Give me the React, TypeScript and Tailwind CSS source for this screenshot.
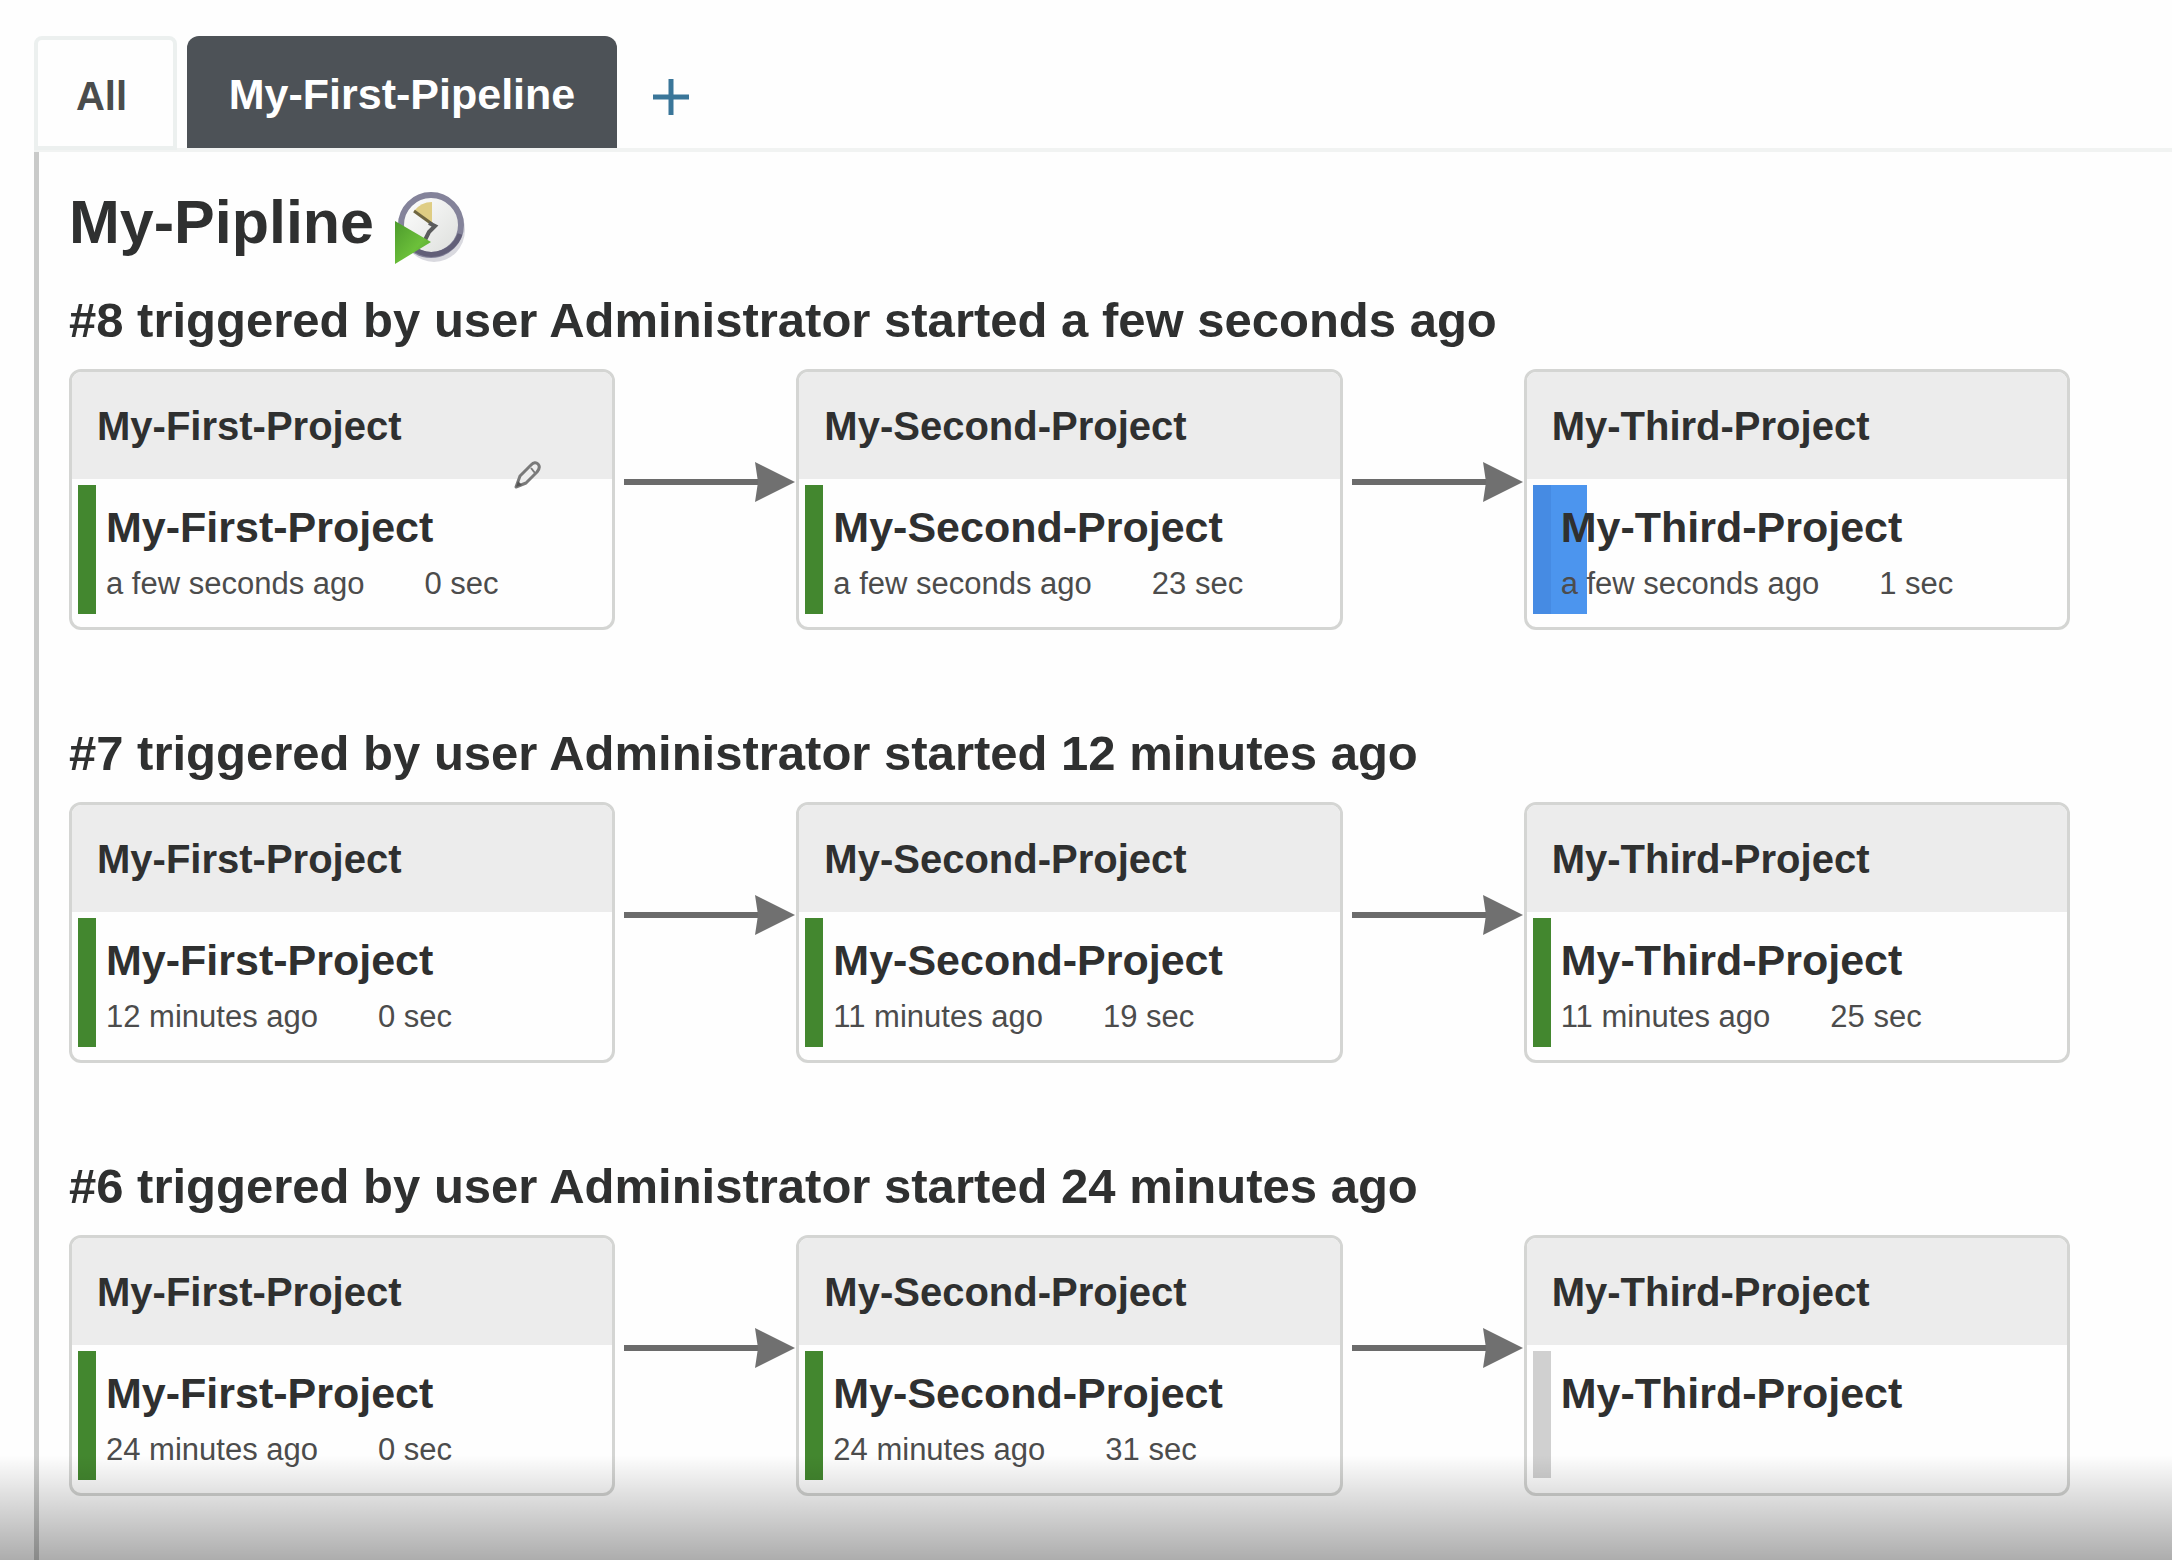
type Status = "success" | "running" | "idle";
type Task = { name: string; status: Status; when?: string; duration?: string; editable?: boolean };
type Run = { title: string; tasks: Task[] };

const runs: Run[] = [
  {
    title: "#8 triggered by user Administrator started a few seconds ago",
    tasks: [
      { name: "My-First-Project", status: "success", when: "a few seconds ago", duration: "0 sec", editable: true },
      { name: "My-Second-Project", status: "success", when: "a few seconds ago", duration: "23 sec" },
      { name: "My-Third-Project", status: "running", when: "a few seconds ago", duration: "1 sec" },
    ],
  },
  {
    title: "#7 triggered by user Administrator started 12 minutes ago",
    tasks: [
      { name: "My-First-Project", status: "success", when: "12 minutes ago", duration: "0 sec" },
      { name: "My-Second-Project", status: "success", when: "11 minutes ago", duration: "19 sec" },
      { name: "My-Third-Project", status: "success", when: "11 minutes ago", duration: "25 sec" },
    ],
  },
  {
    title: "#6 triggered by user Administrator started 24 minutes ago",
    tasks: [
      { name: "My-First-Project", status: "success", when: "24 minutes ago", duration: "0 sec" },
      { name: "My-Second-Project", status: "success", when: "24 minutes ago", duration: "31 sec" },
      { name: "My-Third-Project", status: "idle" },
    ],
  },
];

function PlusIcon() {
  return (
    <svg viewBox="0 0 36 36" className="size-9" aria-hidden="true">
      <path d="M18 0v36M0 18h36" stroke="#3a7699" strokeWidth="5" fill="none" />
    </svg>
  );
}

function ClockIcon() {
  return (
    <svg viewBox="0 0 72 74" className="h-[74px] w-[72px]" aria-hidden="true">
      <defs>
        <linearGradient id="face" x1="0" y1="0" x2="1" y2="1">
          <stop offset="0" stopColor="#ffffff" />
          <stop offset="1" stopColor="#dcdedb" />
        </linearGradient>
        <linearGradient id="play" x1="0" y1="0" x2="1" y2="1">
          <stop offset="0" stopColor="#4c9a2c" />
          <stop offset="0.6" stopColor="#6cc03a" />
          <stop offset="1" stopColor="#4f9c2c" />
        </linearGradient>
      </defs>
      <ellipse cx="40" cy="39" rx="31" ry="32" fill="#d9d9df" />
      <circle cx="37" cy="34" r="30" fill="url(#face)" stroke="#84839a" strokeWidth="6" />
      <path d="M14 52A30 30 0 0 0 66 43" fill="none" stroke="#625f78" strokeWidth="5" />
      <path d="M20 20Q27 11 38 11L38 33Z" fill="#dfcd83" />
      <path d="M20 20L38 33" stroke="#6f6640" strokeWidth="3" />
      <path d="M35 32l6 3-6 6-4 8" stroke="#5b5c5d" strokeWidth="4" fill="none" />
      <path d="M1 30L37 51L1 73Z" fill="url(#play)" />
    </svg>
  );
}

function PencilIcon() {
  return (
    <svg viewBox="0 0 28 28" className="size-7" aria-hidden="true">
      <path
        d="M2 26L6 15L17 4Q21 0 24 3Q27 6 23 11L12 22Z"
        fill="#efefef"
        stroke="#7a7a7a"
        strokeWidth="3"
        strokeLinejoin="round"
      />
      <path d="M17 7l4 5" stroke="#7a7a7a" strokeWidth="2" />
      <path d="M2 26l2-6 4 4z" fill="#555" />
    </svg>
  );
}

function Arrow() {
  return (
    <svg viewBox="0 0 172 40" className="ml-[9px] mt-[93px] h-10 w-[172px] shrink-0" aria-hidden="true">
      <path d="M0 20H140" stroke="#6b6b6b" strokeWidth="6" />
      <path d="M131 0L171 20L131 40L134 20Z" fill="#707070" />
    </svg>
  );
}

function StatusBar({ status }: { status: Status }) {
  if (status === "running") {
    return (
      <div className="absolute top-[6px] left-[6px] flex h-[129px] w-[54px] bg-[#4c95ee]">
        <div className="w-[18px] bg-[#468be3]" />
      </div>
    );
  }
  if (status === "idle") {
    return <div className="absolute top-[6px] left-[6px] h-[127px] w-[18px] bg-[#d0d0d0]" />;
  }
  return <div className="absolute top-[6px] left-[6px] h-[129px] w-[18px] bg-[#43872f]" />;
}

function Card({ task }: { task: Task }) {
  return (
    <article className="h-[261px] min-w-0 flex-1 overflow-hidden rounded-xl border-3 border-[#d4d5d3] bg-[#fefefe]">
      <header className="flex h-[107px] items-center bg-[#ececec] pl-[25px]">
        <h3 className="text-[40px] leading-[48px] font-bold">{task.name}</h3>
      </header>
      <div className="relative h-[148px]">
        <StatusBar status={task.status} />
        <div className="relative pt-[23px] pl-[34px]">
          <a href="#task" className="block text-[43px] leading-[50px] font-bold">
            {task.name}
          </a>
          {task.when && (
            <p className="mt-[14px] flex gap-[60px] text-[31px] leading-[36px] text-[#4c4c4c]">
              <span>{task.when}</span>
              <span>{task.duration}</span>
            </p>
          )}
        </div>
        {task.editable && (
          <button type="button" aria-label="Edit task" className="absolute -top-[18px] right-[70px]">
            <PencilIcon />
          </button>
        )}
      </div>
    </article>
  );
}

export default function App() {
  return (
    <div className="relative flex h-screen flex-col overflow-hidden bg-[#fefefe] pl-[34px] pt-9 font-['Liberation_Sans',Arial,sans-serif] text-[#2f3030]">
      <nav className="flex h-[116px] items-start border-b-4 border-[#f1f3f2]">
        <a
          href="#all"
          className="flex h-[114px] w-[143px] items-center justify-center rounded-t-lg border-4 border-[#ecf0ef] pt-[5px] pr-2 text-[40px] font-bold text-[#4a4c4c]"
        >
          All
        </a>
        <a
          href="#my-first-pipeline"
          className="ml-[10px] flex h-28 w-[430px] items-center justify-center rounded-t-xl bg-[#4d5257] pt-[5px] text-[43px] font-bold text-white"
        >
          My-First-Pipeline
        </a>
        <button type="button" aria-label="New view" className="mt-[43px] ml-9">
          <PlusIcon />
        </button>
      </nav>
      <main className="flex-1 border-l-5 border-[#c9cac9] pr-[102px] pl-[30px]">
        <div className="flex h-[128px] items-start gap-5 pt-9">
          <h1 className="text-[61px] leading-[68px] font-bold">My-Pipline</h1>
          <button type="button" aria-label="Trigger a build" className="mt-[3px]">
            <ClockIcon />
          </button>
        </div>
        {runs.map((run) => (
          <section key={run.title} className="mb-[83px]">
            <h2 className="h-[89px] pt-[13px] text-[49px] leading-[54px] font-bold whitespace-nowrap">{run.title}</h2>
            <div className="flex items-start">
              {run.tasks.map((task, i) => (
                <div key={task.name} className="contents">
                  {i > 0 && <Arrow />}
                  <Card task={task} />
                </div>
              ))}
            </div>
          </section>
        ))}
      </main>
      <div className="pointer-events-none absolute inset-x-0 bottom-0 h-[105px] bg-linear-to-b from-black/0 to-black/32" />
    </div>
  );
}
